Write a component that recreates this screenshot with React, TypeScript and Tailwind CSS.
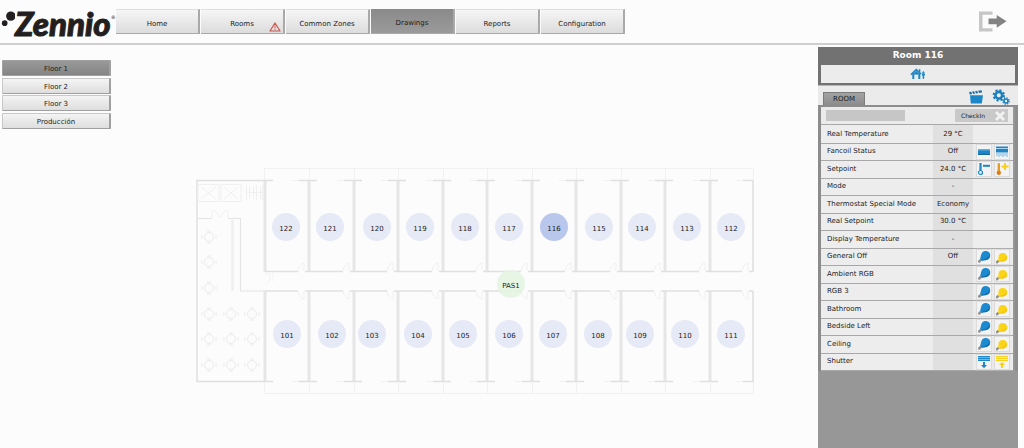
import React, { useState } from 'react';

type Action = 'fanOff' | 'fanOn' | 'tempDown' | 'tempUp' | 'lightOff' | 'lightOn' | 'shutterDown' | 'shutterUp';

interface Row {
  label: string;
  value?: string;
  actions?: Action[];
}

interface Marker {
  name: string;
  x: number;
  y: number;
}

const NAV_ITEMS = ['Home', 'Rooms', 'Common Zones', 'Drawings', 'Reports', 'Configuration'];
const FLOORS = ['Floor 1', 'Floor 2', 'Floor 3', 'Producción'];
const LIGHT: Action[] = ['lightOff', 'lightOn'];

const ROWS: Row[] = [
  { label: 'Real Temperature', value: '29 °C' },
  { label: 'Fancoil Status', value: 'Off', actions: ['fanOff', 'fanOn'] },
  { label: 'Setpoint', value: '24.0 °C', actions: ['tempDown', 'tempUp'] },
  { label: 'Mode', value: '-' },
  { label: 'Thermostat Special Mode', value: 'Economy' },
  { label: 'Real Setpoint', value: '30.0 °C' },
  { label: 'Display Temperature', value: '-' },
  { label: 'General Off', value: 'Off', actions: LIGHT },
  { label: 'Ambient RGB', actions: LIGHT },
  { label: 'RGB 3', actions: LIGHT },
  { label: 'Bathroom', actions: LIGHT },
  { label: 'Bedside Left', actions: LIGHT },
  { label: 'Ceiling', actions: LIGHT },
  { label: 'Shutter', actions: ['shutterDown', 'shutterUp'] },
];

// Marker centres, in plan coordinates
const MARKERS: Marker[] = [
  { name: '122', x: 91, y: 60 },
  { name: '121', x: 135, y: 60 },
  { name: '120', x: 182, y: 60 },
  { name: '119', x: 225, y: 60 },
  { name: '118', x: 270, y: 60 },
  { name: '117', x: 314, y: 60 },
  { name: '116', x: 359, y: 60 },
  { name: '115', x: 404, y: 60 },
  { name: '114', x: 447, y: 60 },
  { name: '113', x: 492, y: 60 },
  { name: '112', x: 536, y: 60 },
  { name: 'PAS1', x: 316, y: 117 },
  { name: '101', x: 92, y: 167 },
  { name: '102', x: 137, y: 167 },
  { name: '103', x: 177, y: 167 },
  { name: '104', x: 223, y: 167 },
  { name: '105', x: 268, y: 167 },
  { name: '106', x: 314, y: 167 },
  { name: '107', x: 358, y: 167 },
  { name: '108', x: 403, y: 167 },
  { name: '109', x: 445, y: 167 },
  { name: '110', x: 490, y: 167 },
  { name: '111', x: 536, y: 167 },
];

const Logo = () => (
  <a href="#" aria-label="Zennio" className="flex h-8 w-[115px] items-start text-[#231f20]">
    <svg viewBox="0 0 16 32" className="h-8 w-[15px] shrink-0" fill="currentColor">
      <circle cx="11.500" cy="6.500" r="5" />
      <circle cx="5" cy="14" r="3" />
    </svg>
    <span className="font-[Lato] text-[33px] leading-[28px] font-black italic [-webkit-text-stroke:1px_currentColor]">Zennio</span>
    <span className="pt-1 text-[5px] leading-[8px]">®</span>
  </a>
);

const ExitIcon = () => (
  <svg viewBox="0 0 30 22" className="h-[22px] w-[30px]">
    <path d="M14.500 0.500H1v20h13.500v-3.200H4.500V3.700h10z" fill="#c6c6c6" />
    <path d="M10.500 7.500h8.200V4L28.500 10.300l-9.800 6.500v-3.500h-8.200z" fill="#838383" />
  </svg>
);

const WarningIcon = () => (
  <svg viewBox="0 0 12 10" className="h-[10px] w-3" fill="none" stroke="#c8544c">
    <path d="M6 1L11 9H1z" strokeWidth="1.200" strokeLinejoin="round" />
    <path d="M6 3.600v2.800M6 7.200v.9" strokeWidth="1" />
  </svg>
);

const HomeIcon = () => (
  <svg viewBox="0 0 16 12" className="h-3 w-4" fill="none" stroke="#1c86c6">
    <path d="M1 6.600L6.300 1.600L11 6" strokeWidth="1.700" />
    <path d="M9.600 1.200v3.200" strokeWidth="1.400" />
    <path d="M3.300 11V5.500M9.300 11V5.500" strokeWidth="2" />
    <path d="M3 6.200L6.300 3.200L9.600 6.200z" fill="#1c86c6" strokeWidth=".6" />
    <path d="M13.400 4.500V10.800" strokeWidth="1.500" />
    <path d="M11.900 6.600h3" strokeWidth="2" />
    <circle cx="13.400" cy="4.400" r=".7" strokeWidth="1" />
  </svg>
);

const ClapperIcon = () => (
  <svg viewBox="0 0 15 15" className="size-[15px]">
    <path d="M1 5.200h13L12.800 13.500H1.800z" fill="#1b86c8" />
    <path d="M0.600 4.400L0.200 2L12.600 0.200L13 2.600z" fill="#1b6fa8" />
    <path d="M2.500 1.200l1.200 3M5.500 .8l1.200 3M8.500 .4l1.200 3" stroke="#ebebeb" strokeWidth="1" />
  </svg>
);

const GearsIcon = () => (
  <svg viewBox="0 0 18 16" className="h-4 w-[18px]" fill="none">
    <circle cx="6.800" cy="6.300" r="3.400" stroke="#1c7fbe" strokeWidth="2.600" />
    <circle cx="6.800" cy="6.300" r="5.200" stroke="#1c7fbe" strokeWidth="2" strokeDasharray="2.100 1.984" />
    <circle cx="14" cy="12" r="2" stroke="#1c7fbe" strokeWidth="1.600" />
    <circle cx="14" cy="12" r="3.200" stroke="#1c7fbe" strokeWidth="1.300" strokeDasharray="1.300 1.213" />
  </svg>
);

const OffBulb = () => (
  <>
    <path d="M1.500 12.800l-.6-1.900 2.300-2.100 1.900 1.800-2.300 2.200z" fill="#8f8f8f" />
    <path d="M3 8.800C3.800 7.800 3.500 6.300 4.300 4.500a4.500 4.500 0 1 1 5 5.400C7.600 10.200 6.200 10 5 10.700z" fill="#1c8ad0" />
    <path d="M12.600 4a4.500 4.500 0 0 1-3.300 5.900C7.600 10.200 6.200 10 5 10.700L4.400 10C7 8.800 11 9 12.600 4z" fill="#1470ae" />
  </>
);

const OnBulb = () => (
  <>
    <path d="M1.300 13.500l-.5-1.800 1.900-1.900 1.700 1.700-2 2z" fill="#8f8f8f" />
    <path d="M2.900 10.200C3.700 9.500 3.300 8.500 3.500 7a4.300 4.300 0 1 1 5 4.500C6.800 11.700 5.500 11 4.500 12z" fill="#fbd416" />
    <path d="M11.800 5.500a4.300 4.300 0 0 1-3.300 6C6.800 11.700 5.500 11 4.500 12L4 11.300C7 10 10.800 10.500 11.800 5.500z" fill="#f4c50f" />
  </>
);

const Shutter = ({ color, light, up }: { color: string; light: string; up?: boolean }) => (
  <>
    <path d="M1 1h12v5H1z" fill={light} />
    <path d="M1 1.500h12M1 3.500h12M1 5.500h12" stroke={color} strokeWidth="1" />
    {up ? <path d="M7 7l3 3H8v3H6v-3H4z" fill={color} /> : <path d="M7 13.200L4 10h2V7h2v3h2z" fill={color} />}
  </>
);

const ActionIcon = ({ action }: { action: Action }) => (
  <svg viewBox="0 0 14 14" className="size-[14px]">
    {action === 'fanOff' && (
      <>
        <path d="M1 4h12v6H1z" fill="#1d83c4" />
        <path d="M1 4h12v1.600H1z" fill="#5baede" />
        <path d="M1 9h12v1H1z" fill="#12649b" />
      </>
    )}
    {action === 'fanOn' && (
      <>
        <path d="M1 1.500h12v6H1z" fill="#1d83c4" />
        <path d="M1 3h12v1H1z" fill="#a7d6f0" />
        <path d="M2 8v3M4 8v4M6 8v3M8 8v4M10 8v3M12 8v4" stroke="#77b9e0" strokeWidth="1" />
      </>
    )}
    {action === 'tempDown' && (
      <>
        <path d="M3.500 1v8.500" stroke="#1c86c6" strokeWidth="2.200" />
        <circle cx="3.500" cy="10.500" r="2" fill="#e8f4fb" stroke="#1c86c6" strokeWidth="1.200" />
        <path d="M6 3.800h7" stroke="#1c86c6" strokeWidth="2" />
      </>
    )}
    {action === 'tempUp' && (
      <>
        <path d="M3.800 1.200v9" stroke="#e89b1c" strokeWidth="2.400" />
        <circle cx="3.800" cy="10.800" r="2.200" fill="#dc7d19" />
        <path d="M6.500 4.500h7M10 1v7" stroke="#f8cf1c" strokeWidth="2" />
      </>
    )}
    {action === 'lightOff' && <OffBulb />}
    {action === 'lightOn' && <OnBulb />}
    {action === 'shutterDown' && <Shutter color="#1c86c6" light="#6fb8e2" />}
    {action === 'shutterUp' && <Shutter color="#f8cf1c" light="#fdeea5" up />}
  </svg>
);

const WALLS = [70, 114, 159, 203, 248, 292, 337, 381, 426, 470, 515, 558];
const TABLES = [
  [14, 70], [14, 95], [14, 121], [14, 147], [36, 147], [57, 147],
  [14, 172], [36, 172], [57, 172], [14, 198], [36, 198], [57, 198],
];

const FloorPlan = () => (
  <svg viewBox="0 0 560 228" className="h-[228px] w-[560px]" fill="none">
    {/* balconies */}
    <path d="M69.500 13V1.500H558.500V13M69.500 215V226.500H558.500V215" stroke="#f1f1f1" />
    {WALLS.map((x, i) => (
      <g key={x}>
        {i > 0 && i < WALLS.length - 1 && (
          <path d={`M${x + 0.5} 2V13M${x + 0.5} 216V226`} stroke="#f1f1f1" />
        )}
        <path
          d={`M${x} 13V105M${x} 124V215`}
          stroke="#e6e6e6"
          strokeWidth={i === WALLS.length - 1 ? 2 : 3}
        />
        {i > 0 && (
          <>
            <path d={`M${x - 10} 13.500H${x}M${x - 10} 214.500H${x}`} stroke="#e0e0e0" strokeWidth="1.500" />
            <path d={`M${x - 17} 13.500h7M${x - 17} 214.500h7`} stroke="#f1f1f1" />
            <path d={`M${WALLS[i - 1]} 104.500H${x - 11}M${x - 4} 104.500H${x}`} stroke="#e0e0e0" strokeWidth="1.500" />
            <path d={`M${WALLS[i - 1]} 124H${x - 11}M${x - 4} 124H${x}`} stroke="#e0e0e0" strokeWidth="1.500" />
            <path d={`M${x - 11} 104c1-5 3-7 6-8v8M${x - 11} 124c1 5 3 7 6 8v-8`} stroke="#f0f0f0" />
          </>
        )}
        {i < WALLS.length - 1 && (
          <path d={`M${x} 13.500h8M${x} 214.500h8`} stroke="#e0e0e0" strokeWidth="1.500" />
        )}
      </g>
    ))}
    {/* lobby */}
    <path d="M70 13.500H2V214.500H70" stroke="#dfdfdf" strokeWidth="1.500" />
    <path d="M2 51.500H17M33 51.500H45.500V124H70" stroke="#e4e4e4" strokeWidth="1.200" />
    <path d="M37.500 53V124" stroke="#efefef" strokeWidth="2.500" />
    <path d="M17 51V44h3l5 6 5-6h3v7" stroke="#f0f0f0" />
    <path d="M3 17.500H24V34.500H3zM26 17.500H46V34.500H26zM6 20L21 32M21 20L6 32M29 20L43 32M43 20L29 32" stroke="#f0f0f0" />
    <path d="M51.500 18V33M54.500 20V31M58.500 19V32M61.500 18V33M65.500 20V32M67.500 18V33M51 25.500H67" stroke="#f0f0f0" />
    <path d="M70 107h5v6l-3 4M78 105v9" stroke="#f2f2f2" />
    {TABLES.map(([x, y]) => (
      <g key={`${x}-${y}`} stroke="#ececec">
        <circle cx={x} cy={y} r="4.500" />
        <path d={`M${x - 2} ${y - 6}h4M${x - 2} ${y + 6}h4M${x - 7} ${y - 2}v4M${x + 7} ${y - 2}v4`} />
      </g>
    ))}
  </svg>
);

const markerColor = (name: string, selected: boolean) => {
  if (selected) return 'bg-[#b9c7ec]';
  if (name.startsWith('PAS')) return 'bg-[#e4f4e2]/90';
  return 'bg-[#e6e9f6]';
};

const App: React.FC = () => {
  const [section, setSection] = useState('Drawings');
  const [floor, setFloor] = useState('Floor 1');
  const [room, setRoom] = useState('116');

  return (
    <div className="flex min-h-screen flex-col bg-[#fcfcfc] font-['DejaVu_Sans',Verdana,sans-serif] text-[7px] text-[#1c1c1c]">
      <header className="flex items-start border-b-2 border-[#cfcfcf] pt-[9px] pb-[2px]">
        <Logo />
        <nav className="flex gap-px pl-px">
          {NAV_ITEMS.map(item => (
            <button
              key={item}
              type="button"
              onClick={() => setSection(item)}
              className={`relative h-[25px] w-[84px] border-r-2 border-b border-[#a9a9a9] pt-[5px] ${
                section === item
                  ? 'bg-linear-to-b from-[#8a8a8a] to-[#9a9a9a]'
                  : 'border-t border-t-[#dedede] bg-linear-to-b from-[#f6f6f6] to-[#dcdcdc]'
              }`}
            >
              {item}
              {item === 'Rooms' && (
                <span className="absolute right-[2px] bottom-px">
                  <WarningIcon />
                </span>
              )}
            </button>
          ))}
        </nav>
        <button type="button" aria-label="Log out" className="mt-[2px] mr-4 ml-auto">
          <ExitIcon />
        </button>
      </header>

      <div className="flex flex-1">
        <aside className="w-28 shrink-0 pt-[15px] pl-[2px]">
          {FLOORS.map(item => (
            <div key={item} className="h-[17px] odd:h-[18px]">
              <button
                type="button"
                onClick={() => setFloor(item)}
                className={`h-4 w-[109px] rounded-[1px] border border-r-2 border-[#a0a0a0] pt-[2px] ${
                  floor === item
                    ? 'bg-linear-to-b from-[#999999] to-[#858585]'
                    : 'border-t-[#c8c8c8] border-l-[#c8c8c8] bg-linear-to-b from-[#f4f4f4] to-[#dedede]'
                }`}
              >
                {item}
              </button>
            </div>
          ))}
        </aside>

        <main className="flex flex-1 items-start justify-center pt-[122px] pl-5">
          <div className="relative shrink-0">
            <FloorPlan />
            {MARKERS.map(m => (
              <button
                key={m.name}
                type="button"
                onClick={() => setRoom(m.name)}
                style={{ left: m.x, top: m.y }}
                className={`absolute size-7 -translate-x-1/2 -translate-y-1/2 rounded-full pt-1 ${markerColor(m.name, room === m.name)}`}
              >
                {m.name}
              </button>
            ))}
          </div>
        </main>

        <section className="mt-[2px] mr-[6px] flex w-[200px] shrink-0 flex-col bg-[#979797]">
          <div className="bg-[#727272] px-[3px] pb-[2px]">
            <h2 className="h-[18px] pt-[2px] text-center text-[9px] leading-3 font-bold text-white">Room {room}</h2>
            <button type="button" aria-label="Room overview" className="flex h-[18px] w-full items-center justify-center bg-[#ececec]">
              <HomeIcon />
            </button>
          </div>

          <div className="flex h-5 items-end border-t border-[#b5b5b5] bg-[#ebebeb] pr-2 pl-[5px]">
            <button type="button" className="h-[13px] w-[42px] border border-b-0 border-[#7c7c7c] bg-linear-to-b from-[#a3a3a3] to-[#8c8c8c] pt-px">
              ROOM
            </button>
            <button type="button" aria-label="Scenes" className="mr-2 ml-auto">
              <ClapperIcon />
            </button>
            <button type="button" aria-label="Settings">
              <GearsIcon />
            </button>
          </div>

          <div className="border-x-[3px] border-t-2 border-[#8c8c8c] pr-[2px]">
            <form className="flex h-[18px] items-center justify-between border-b border-[#a8a8a8] bg-[#ebebeb] px-[5px]">
              <input type="text" aria-label="Guest" className="h-[11px] w-[79px] bg-[#c6c6c6] px-1" />
              <button type="button" className="flex h-[13px] w-[53px] items-center justify-between bg-[#c9c9c9] pr-[2px] pl-[6px] text-[6px]">
                CheckIn
                <svg viewBox="0 0 12 12" className="size-3">
                  <path d="M2 2l8 8M10 2l-8 8" stroke="#f1f1f1" strokeWidth="3" />
                </svg>
              </button>
            </form>
            <table className="w-full table-fixed border-collapse">
              <tbody>
                {ROWS.map(row => (
                  <tr key={row.label} className="h-[17px] border-b border-[#a8a8a8] bg-[#ededed] odd:h-[18px]">
                    <th scope="row" className="p-0 pl-[6px] text-left font-normal">{row.label}</th>
                    <td className="w-10 bg-[#e0e0e0] p-0 text-center">{row.value}</td>
                    <td className="w-10 p-0">
                      <div className="flex justify-center gap-1">
                        {row.actions?.map(action => (
                          <button
                            key={action}
                            type="button"
                            aria-label={`${row.label} ${action}`}
                            className="bg-[#f3f3f3] shadow-[0_0_1px_1px_#dcdcdc]"
                          >
                            <ActionIcon action={action} />
                          </button>
                        ))}
                      </div>
                    </td>
                  </tr>
                ))}
              </tbody>
            </table>
          </div>
        </section>
      </div>
    </div>
  );
};

export default App;
